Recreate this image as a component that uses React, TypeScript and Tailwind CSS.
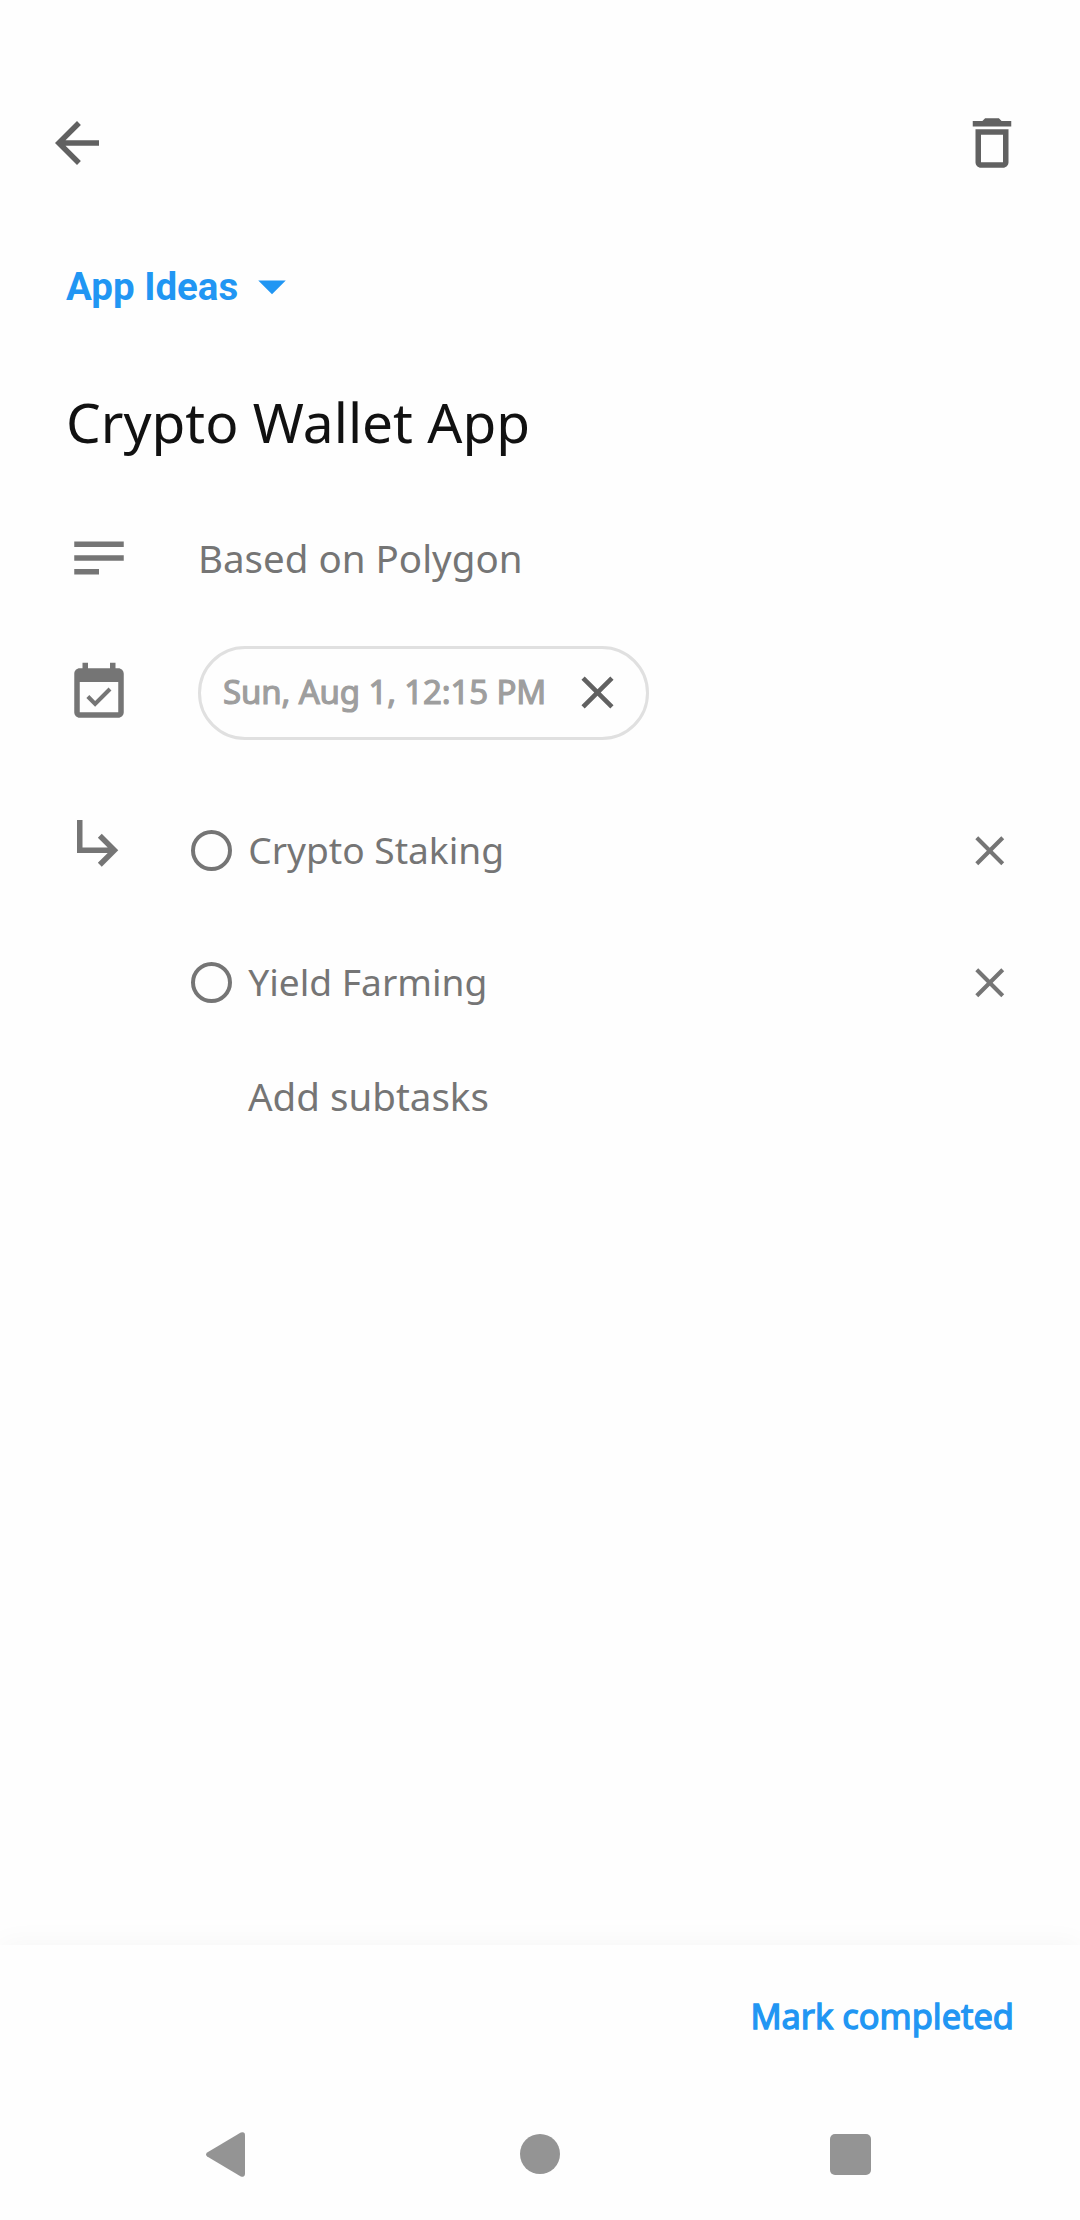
type IconProps = { d: string; className: string };

function Icon({ d, className }: IconProps) {
  return (
    <svg viewBox="0 0 24 24" fill="currentColor" className={`shrink-0 ${className}`}>
      <path d={d} />
    </svg>
  );
}

const BACK = 'M20 11H7.83l5.59-5.59L12 4l-8 8 8 8 1.41-1.41L7.83 13H20v-2z';
const TRASH = 'M6 19c0 1.1.9 2 2 2h8c1.1 0 2-.9 2-2V7H6v12zM8 9h8v10H8V9zm7.5-5l-1-1h-5l-1 1H5v2h14V4h-3.5z';
const DROPDOWN = 'M7 10l5 5 5-5z';
const NOTES = 'M3 6h18v2H3zM3 11h18v2H3zM3 16h9v2H3z';
const CALENDAR =
  'M16.53 11.06L15.47 10l-4.88 4.88-2.12-2.12-1.06 1.06L10.59 17l5.94-5.94zM19 3h-1V1h-2v2H8V1H6v2H5c-1.11 0-1.99.9-1.99 2L3 19c0 1.1.89 2 2 2h14c1.1 0 2-.9 2-2V5c0-1.1-.9-2-2-2zm0 16H5V8h14v11z';
const SUBTASK = 'M19 15l-6 6-1.42-1.42L15.17 16H4V4h2v10h9.17l-3.59-3.58L13 9l6 6z';
const CLOSE = 'M19 6.41L17.59 5 12 10.59 6.41 5 5 6.41 10.59 12 5 17.59 6.41 19 12 13.41 17.59 19 19 17.59 13.41 12z';

const subtasks = ['Crypto Staking', 'Yield Farming'];

export default function App() {
  return (
    <div className="flex h-[2220px] w-[1080px] flex-col bg-[#fefefe] font-['Noto_Sans',sans-serif] text-[#757575]">
      <header className="flex justify-between pt-[110px] pr-[55px] pl-[44px] text-[#616161]">
        <button aria-label="Back">
          <Icon d={BACK} className="size-[66px]" />
        </button>
        <button aria-label="Delete task">
          <Icon d={TRASH} className="size-[66px]" />
        </button>
      </header>

      <main className="flex grow flex-col px-[66px]">
        <div className="mt-[77px] flex h-[66px] items-center gap-px text-[#2196f3]">
          <span className="pt-[2px] font-['Roboto',sans-serif] text-[38.5px] leading-[66px] font-bold">App Ideas</span>
          <Icon d={DROPDOWN} className="size-[66px]" />
        </div>

        <h1 className="mt-[65px] text-[55px] leading-[76px] text-[#111111]">Crypto Wallet App</h1>

        <div className="mt-[65px] flex h-[66px] items-center gap-[66px]">
          <Icon d={NOTES} className="size-[66px]" />
          <p className="text-[38.5px] leading-[66px]">Based on Polygon</p>
        </div>

        <div className="mt-[55px] flex h-[93.5px] items-center gap-[66px]">
          <Icon d={CALENDAR} className="size-[66px]" />
          <div className="flex h-[93.5px] w-[451px] items-center justify-between rounded-full border-[3px] border-[#e0e0e0] pr-[21.25px] pl-[22px]">
            <span className="pb-[2px] text-[33px] leading-[60px] tracking-[-0.14px] text-[#9e9e9e] [-webkit-text-stroke:1.2px_#9e9e9e]">
              Sun, Aug 1, 12:15 PM
            </span>
            <Icon d={CLOSE} className="size-[55px] text-[#616161]" />
          </div>
        </div>

        <div className="mt-[45px] flex">
          <Icon d={SUBTASK} className="mt-[24.5px] size-[66px]" />
          <div className="ml-[59px] grow">
            {subtasks.map((name) => (
              <div key={name} className="flex h-[132px] items-center">
                <span className="size-[41.25px] rounded-full border-[4px] border-[#757575]" />
                <span className="ml-[16px] grow pb-[2px] text-[37.125px] leading-[66px]">{name}</span>
                <Icon d={CLOSE} className="size-[49.5px]" />
              </div>
            ))}
            <p className="mt-[14px] ml-[57px] text-[38.5px] leading-[66px]">Add subtasks</p>
          </div>
        </div>
      </main>

      <div className="flex h-[141px] shrink-0 items-center justify-end bg-[#fefefe] pr-[66px] shadow-[0_0_28px_rgba(0,0,0,0.045)]">
        <button className="text-[34.375px] leading-[66px] text-[#2196f3] [-webkit-text-stroke:1.3px_#2196f3]">
          Mark completed
        </button>
      </div>

      <nav className="relative flex h-[134px] shrink-0 items-center bg-[#fefefe] pt-[2px] pl-[206px] text-[#949494]">
        <svg viewBox="0 0 39 45" className="h-[45px] w-[39px]" fill="currentColor">
          <path d="M1.2 20.6 34.8 .6Q39 -.8 39 3.4V41.6Q39 45.8 34.8 44.4L1.2 24.4Q-1.2 22.5 1.2 20.6Z" />
        </svg>
        <span className="ml-[275px] size-[40px] rounded-full bg-[#949494]" />
        <span className="ml-[270px] size-[41px] rounded-[5px] bg-[#949494]" />
      </nav>
    </div>
  );
}
